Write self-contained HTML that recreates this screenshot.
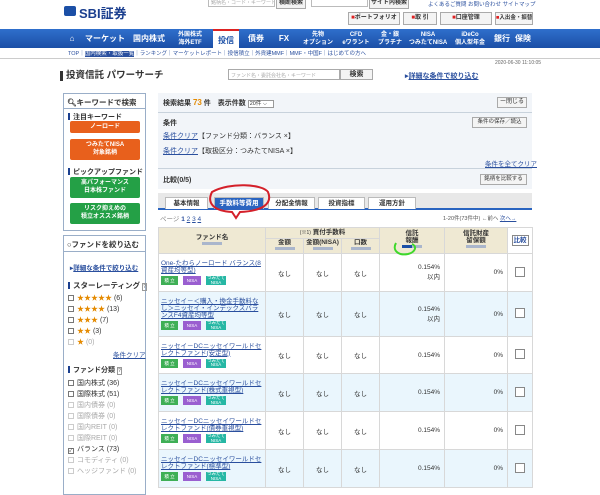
<!DOCTYPE html><html><head><meta charset="utf-8"><style>
*{margin:0;padding:0;box-sizing:border-box}
body{width:600px;height:481px;overflow:hidden;background:#fff;font-family:"Liberation Sans","Noto Sans CJK JP",sans-serif;font-size:7px;color:#333;position:relative}
.a{position:absolute;white-space:nowrap}
a,.l{color:#2a4f9e;text-decoration:underline}
.btn{position:absolute;background:#f4f4f4;border:1px solid #aaa;font-size:6px;text-align:center;line-height:9px;font-weight:bold;white-space:nowrap;overflow:hidden}
.nav{position:absolute;top:29px;left:0;width:600px;height:19px;background:linear-gradient(#2f6fcc,#1b4fa6)}
.nav span{position:absolute;top:0;height:19px;color:#fff;font-weight:bold;font-size:8px;line-height:19px;text-align:center;white-space:nowrap}
.sb{position:absolute;left:63px;width:83px;border:1px solid #9aaec8;background:#fff}
.ob{position:absolute;left:6px;width:70px;background:#e8601c;color:#fff;font-size:6px;text-align:center;border-radius:2px;font-weight:bold}
.gb{position:absolute;left:6px;width:70px;background:#24a046;color:#fff;font-size:6px;text-align:center;border-radius:2px;font-weight:bold}
.hd{font-weight:bold;font-size:7px;white-space:nowrap}
.hd:before{content:"";display:inline-block;width:2px;height:7px;background:#1b3f8f;margin-right:3px;vertical-align:-1px}
.cb{display:inline-block;width:6px;height:6px;border:1px solid #777;margin-right:3px;vertical-align:-1px;background:#fff}
.li{position:absolute;left:4px;font-size:7px;white-space:nowrap}
.tab{position:absolute;top:197px;height:12px;background:#fff;border:1px solid #bbb;border-bottom:none;font-size:6.5px;font-weight:bold;text-align:center;line-height:11px}
table{position:absolute;left:158px;top:227px;width:374px;border-collapse:collapse;font-size:6.5px;table-layout:fixed}
td,th{border:1px solid #d8d8d8;overflow:hidden}
th{background:#efe9d3;font-weight:bold;font-size:6.5px;line-height:7px}
.sort{display:inline-block;width:20px;height:3px;background:#aab6cc;margin-top:1px;vertical-align:top}
.r td{text-align:center}
.fn{text-align:left!important;padding:1px 2px;vertical-align:middle}
.fn a{font-size:6.5px;line-height:7px;display:block}
.bd{display:inline-block;height:9px;font-size:4.5px;color:#fff;line-height:9px;text-align:center;margin-right:5px;margin-top:2px;vertical-align:top}
.g{background:#3faf56;width:17px}.p{background:#9a5fd0;width:18px}.t{background:#26b7a4;width:20px;line-height:4.5px}
.num{text-align:right!important;padding-right:4px}
.ck{display:inline-block;width:10px;height:10px;border:1px solid #888;background:#fff}
.bl{background:#eaf6fd}
</style></head><body>
<div class="a" style="left:64px;top:6px;width:12px;height:10px;background:#1b4fa6;border-radius:2px"></div>
<div class="a" style="left:79px;top:3px;font-size:13px;color:#1b3f8f;font-weight:bold">SBI証券</div>
<div class="a" style="left:208px;top:-2px;width:67px;height:9px;border:1px solid #bbb;font-size:5px;color:#aaa;padding-left:2px;overflow:hidden">銘柄名・コード・キーワード</div>
<div class="btn" style="left:276px;top:-2px;width:30px">横断検索</div>
<div class="a" style="left:311px;top:-2px;width:57px;height:9px;border:1px solid #bbb"></div>
<div class="btn" style="left:369px;top:-2px;width:40px">サイト内検索</div>
<div class="a" style="left:428px;top:0px;font-size:5.5px;color:#2a4f9e">よくあるご質問 お問い合わせ サイトマップ</div>
<div class="btn" style="left:348px;top:12px;width:52px;height:13px;line-height:11px"><span style="color:#d22">■</span>ポートフォリオ</div>
<div class="btn" style="left:403px;top:12px;width:34px;height:13px;line-height:11px"><span style="color:#d22">■</span>取 引</div>
<div class="btn" style="left:440px;top:12px;width:52px;height:13px;line-height:11px"><span style="color:#d22">■</span>口座管理</div>
<div class="btn" style="left:495px;top:12px;width:38px;height:13px;line-height:11px;font-size:5.5px"><span style="color:#d22">■</span>入出金・振替</div>
<div class="nav">
<span style="left:64px;width:16px">⌂</span><span style="left:82px;width:46px">マーケット</span><span style="left:130px;width:38px">国内株式</span><span style="left:170px;width:40px;font-size:6px;line-height:8px;padding-top:2px">外国株式<br>海外ETF</span>
<span style="left:213px;width:26px;background:#fff;color:#1b4fa6;border-top:2px solid #d22">投信</span><span style="left:242px;width:28px">債券</span><span style="left:272px;width:24px">FX</span><span style="left:298px;width:40px;font-size:6px;line-height:8px;padding-top:2px">先物<br>オプション</span><span style="left:340px;width:32px;font-size:6px;line-height:8px;padding-top:2px">CFD<br>eワラント</span><span style="left:374px;width:32px;font-size:6px;line-height:8px;padding-top:2px">金・銀<br>プラチナ</span><span style="left:408px;width:40px;font-size:6px;line-height:8px;padding-top:2px">NISA<br>つみたてNISA</span><span style="left:450px;width:40px;font-size:6px;line-height:8px;padding-top:2px">iDeCo<br>個人型年金</span><span style="left:492px;width:20px">銀行</span><span style="left:513px;width:20px">保険</span></div>
<div class="a" style="left:68px;top:49px;font-size:5.5px;color:#2a4f9e">TOP｜<span style="background:#2a4f9e;color:#fff">国内検索・取扱一覧</span>｜ランキング｜マーケットレポート｜投信積立｜外貨建MMF｜MMF・中国F｜はじめての方へ</div>
<div class="a" style="left:0;top:58px;width:600px;height:1px;background:#ccc"></div>
<div class="a" style="left:495px;top:60px;font-size:5px;color:#666">2020-06-30 11:10:05</div>
<div class="a" style="left:60px;top:71px;font-size:9.5px;font-weight:bold;color:#333;border-left:3px solid #333;padding-left:3px;line-height:10px">投資信託 パワーサーチ</div>
<div class="a" style="left:228px;top:69px;width:112px;height:11px;border:1px solid #aaa;font-size:5px;color:#aaa;padding:2px">ファンド名・委託会社名・キーワード</div>
<div class="btn" style="left:340px;top:69px;width:33px;height:11px;font-size:7px">検索</div>
<div class="a" style="left:405px;top:71px;font-size:7px;color:#2a4f9e;font-weight:bold">▸<u>詳細な条件で絞り込む</u></div>
<div class="sb" style="top:93px;height:138px">
<div style="height:15px;border-bottom:1px solid #9aaec8;font-size:7.5px;font-weight:bold;padding:3px 3px;white-space:nowrap">🔍︎キーワードで検索</div>
<div class="hd" style="position:absolute;left:4px;top:18px">注目キーワード</div>
<div class="ob" style="top:27px;height:12px;line-height:12px">ノーロード</div>
<div class="ob" style="top:45px;height:21px;line-height:8px;padding-top:2px">つみたてNISA<br>対象銘柄</div>
<div class="hd" style="position:absolute;left:4px;top:73px">ピックアップファンド</div>
<div class="gb" style="top:83px;height:21px;line-height:8px;padding-top:2px">高パフォーマンス<br>日本株ファンド</div>
<div class="gb" style="top:109px;height:21px;line-height:8px;padding-top:2px">リスク抑えめの<br>積立オススメ銘柄</div>
</div>
<div class="sb" style="top:235px;height:260px">
<div style="height:16px;border-bottom:1px solid #9aaec8;font-size:7.5px;font-weight:bold;padding:3px 3px;white-space:nowrap">○ファンドを絞り込む</div>
<div class="a" style="left:6px;top:26px;font-size:6.5px;color:#2a4f9e;font-weight:bold">▸<u>詳細な条件で絞り込む</u></div>
<div class="hd" style="position:absolute;left:4px;top:44px;font-size:7.5px">スターレーティング <span style="border:1px solid #999;font-size:5px;color:#888">?</span></div>
<div class="li" style="top:57px"><span class="cb"></span><span style="color:#e48a00">★★★★★</span> (6)</div>
<div class="li" style="top:68px"><span class="cb"></span><span style="color:#e48a00">★★★★</span> (13)</div>
<div class="li" style="top:79px"><span class="cb"></span><span style="color:#e48a00">★★★</span> (7)</div>
<div class="li" style="top:90px"><span class="cb"></span><span style="color:#e48a00">★★</span> (3)</div>
<div class="li" style="top:101px;color:#aaa"><span class="cb" style="border-color:#ccc"></span><span style="color:#e48a00">★</span> (0)</div>
<div class="a l" style="left:49px;top:113px;font-size:6.5px">条件クリア</div>
<div class="hd" style="position:absolute;left:4px;top:129px;font-size:7px">ファンド分類 <span style="border:1px solid #999;font-size:5px;color:#888">?</span></div>
<div class="li" style="top:142px"><span class="cb"></span>国内株式 (36)</div>
<div class="li" style="top:153px"><span class="cb"></span>国際株式 (51)</div>
<div class="li" style="top:164px;color:#aaa"><span class="cb" style="border-color:#ccc"></span>国内債券 (0)</div>
<div class="li" style="top:175px;color:#aaa"><span class="cb" style="border-color:#ccc"></span>国際債券 (0)</div>
<div class="li" style="top:186px;color:#aaa"><span class="cb" style="border-color:#ccc"></span>国内REIT (0)</div>
<div class="li" style="top:197px;color:#aaa"><span class="cb" style="border-color:#ccc"></span>国際REIT (0)</div>
<div class="li" style="top:208px"><span class="cb" style="font-size:5px;line-height:4px">✓</span>バランス (73)</div>
<div class="li" style="top:219px;color:#aaa"><span class="cb" style="border-color:#ccc"></span>コモディティ (0)</div>
<div class="li" style="top:230px;color:#aaa"><span class="cb" style="border-color:#ccc"></span>ヘッジファンド (0)</div>
</div>
<div class="a" style="left:158px;top:93px;width:374px;height:96px;background:#f2f5f9"></div>
<div class="a" style="left:163px;top:98px;font-size:7px;font-weight:bold">検索結果 <span style="color:#e48a00;font-size:8px">73</span> 件　表示件数 <span style="border:1px solid #999;background:#fff;font-weight:normal;font-size:5.5px;padding:0 6px 0 1px">20件 ⌵</span></div>
<div class="btn" style="left:497px;top:97px;width:30px;font-weight:normal">ー閉じる</div>
<div class="a" style="left:158px;top:112px;width:374px;height:1px;background:#c8d2dc"></div>
<div class="a" style="left:163px;top:118px;font-weight:bold">条件</div>
<div class="a" style="left:163px;top:131px"><span class="l">条件クリア</span>【ファンド分類：バランス ×】</div>
<div class="a" style="left:163px;top:146px"><span class="l">条件クリア</span>【取扱区分：つみたてNISA ×】</div>
<div class="btn" style="left:472px;top:117px;width:55px;font-weight:normal;font-size:5.5px">条件の保存／読込</div>
<div class="a l" style="left:485px;top:158px;font-size:6.5px">条件を全てクリア</div>
<div class="a" style="left:158px;top:168px;width:374px;height:1px;background:#c8d2dc"></div>
<div class="a" style="left:163px;top:175px;font-weight:bold">比較(0/5)</div>
<div class="btn" style="left:480px;top:174px;width:47px;font-weight:normal;font-size:5.5px">銘柄を比較する</div>
<div class="a" style="left:158px;top:193px;width:374px;height:17px;background:#e8e8e8;border-bottom:2px solid #2a64c0"></div>
<div class="tab" style="left:165px;width:43px">基本情報</div>
<div class="tab" style="left:214px;width:50px;background:#2a64c0;color:#fff">手数料等費用</div>
<div class="tab" style="left:268px;width:47px">分配金情報</div>
<div class="tab" style="left:318px;width:47px">投資指標</div>
<div class="tab" style="left:368px;width:48px">運用方針</div>
<div class="a" style="left:160px;top:213px;font-size:6.5px"><span style="color:#888">ページ</span> <b style="color:#2a4f9e">1</b> <u style="color:#2a4f9e">2</u> <u style="color:#2a4f9e">3</u> <u style="color:#2a4f9e">4</u></div>
<div class="a" style="left:443px;top:214px;font-size:5.5px;color:#555">1-20件(73件中) ←前へ <u style="color:#2a4f9e">次へ→</u></div>
<table>
<colgroup><col style="width:107px"><col style="width:38px"><col style="width:38px"><col style="width:38px"><col style="width:65px"><col style="width:63px"><col style="width:25px"></colgroup>
<tr style="height:11px"><th rowspan="2">ファンド名<br><span class="sort"></span></th><th colspan="3"><span style="font-size:5px;font-weight:normal">(※1)</span> 買付手数料</th><th rowspan="2">信託<br>報酬<br><span class="sort" style="background:#1b4fa6;width:10px"></span><span class="sort" style="width:10px"></span></th><th rowspan="2">信託財産<br>留保額<br><span class="sort"></span></th><th rowspan="2" style="background:#fff"><span style="border:1px solid #888;padding:1px;color:#2a4f9e">比較</span></th></tr>
<tr style="height:15px"><th>金額<br><span class="sort"></span></th><th>金額(NISA)<br><span class="sort"></span></th><th>口数<br><span class="sort"></span></th></tr>
<tr class="r" style="height:38px"><td class="fn"><a>One-たわらノーロード バランス(8資産均等型)</a><span class="bd g">積 立</span><span class="bd p">NISA</span><span class="bd t">つみたて<br>NISA</span></td><td>なし</td><td>なし</td><td>なし</td><td class="num">0.154%<br>以内</td><td class="num">0%</td><td><span class="ck"></span></td></tr>
<tr class="r bl" style="height:45px"><td class="fn"><a>ニッセイ－＜購入・換金手数料なし＞ニッセイ・インデックスバランスF4資産均等型</a><span class="bd g">積 立</span><span class="bd p">NISA</span><span class="bd t">つみたて<br>NISA</span></td><td>なし</td><td>なし</td><td>なし</td><td class="num">0.154%<br>以内</td><td class="num">0%</td><td><span class="ck"></span></td></tr>
<tr class="r" style="height:37px"><td class="fn"><a>ニッセイ－DCニッセイワールドセレクトファンド(安定型)</a><span class="bd g">積 立</span><span class="bd p">NISA</span><span class="bd t">つみたて<br>NISA</span></td><td>なし</td><td>なし</td><td>なし</td><td class="num">0.154%</td><td class="num">0%</td><td><span class="ck"></span></td></tr>
<tr class="r bl" style="height:38px"><td class="fn"><a>ニッセイ－DCニッセイワールドセレクトファンド(株式重視型)</a><span class="bd g">積 立</span><span class="bd p">NISA</span><span class="bd t">つみたて<br>NISA</span></td><td>なし</td><td>なし</td><td>なし</td><td class="num">0.154%</td><td class="num">0%</td><td><span class="ck"></span></td></tr>
<tr class="r" style="height:38px"><td class="fn"><a>ニッセイ－DCニッセイワールドセレクトファンド(債券重視型)</a><span class="bd g">積 立</span><span class="bd p">NISA</span><span class="bd t">つみたて<br>NISA</span></td><td>なし</td><td>なし</td><td>なし</td><td class="num">0.154%</td><td class="num">0%</td><td><span class="ck"></span></td></tr>
<tr class="r bl" style="height:38px"><td class="fn"><a>ニッセイ－DCニッセイワールドセレクトファンド(標準型)</a><span class="bd g">積 立</span><span class="bd p">NISA</span><span class="bd t">つみたて<br>NISA</span></td><td>なし</td><td>なし</td><td>なし</td><td class="num">0.154%</td><td class="num">0%</td><td><span class="ck"></span></td></tr>
</table>
<svg class="a" style="left:0;top:0" width="600" height="481"><path d="M212 192 C230 182,262 184,268 192 C273 204,262 211,240 212 L236 218 L232 212 C215 211,206 204,212 192Z" fill="none" stroke="#d4202a" stroke-width="2"/><path d="M396 243 C392 250,398 256,408 254 C416 252,417 246,412 244" fill="none" stroke="#3ed82a" stroke-width="2"/></svg>
</body></html>
